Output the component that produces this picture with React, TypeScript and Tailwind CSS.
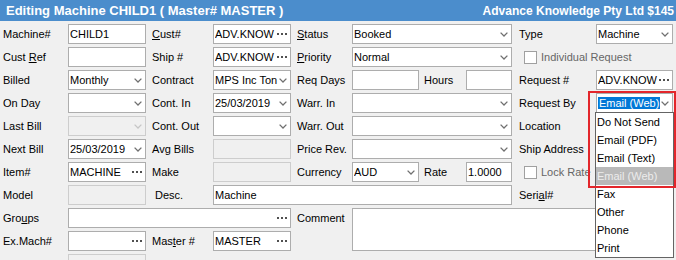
import type { ReactNode } from 'react';

const FONT = "font-['Liberation_Sans',Arial,sans-serif]";

function Chevron({ disabled }: { disabled?: boolean }) {
  return (
    <svg width="8" height="5" viewBox="0 0 8 5" className="shrink-0">
      <path d="M0.6 0.6 L4 4 L7.4 0.6" fill="none" stroke={disabled ? '#c6c6c6' : '#707070'} strokeWidth="1.3" />
    </svg>
  );
}

function Dots() {
  return (
    <svg width="10" height="2" viewBox="0 0 10 2" className="shrink-0">
      <rect x="0" y="0" width="2" height="2" fill="#505050" />
      <rect x="4" y="0" width="2" height="2" fill="#505050" />
      <rect x="8" y="0" width="2" height="2" fill="#505050" />
    </svg>
  );
}

type Kind = 'text' | 'select' | 'lookup';

function Field({
  value = '',
  kind = 'text',
  disabled,
  className = '',
  children,
}: {
  value?: string;
  kind?: Kind;
  disabled?: boolean;
  className?: string;
  children?: ReactNode;
}) {
  return (
    <div
      className={`flex h-[20px] items-center border px-[1px] ${
        disabled ? 'border-[#cdcdcd] bg-[#f0f0f0]' : 'border-[#adadad] bg-white'
      } ${className}`}
    >
      <span className="flex-1 truncate whitespace-nowrap">{children ?? value}</span>
      {kind === 'select' && (
        <span className="pr-[2px]">
          <Chevron disabled={disabled} />
        </span>
      )}
      {kind === 'lookup' && (
        <span className="pr-[2px]">
          <Dots />
        </span>
      )}
    </div>
  );
}

function Label({ children, className = '' }: { children?: ReactNode; className?: string }) {
  return <div className={`flex items-center whitespace-pre ${className}`}>{children}</div>;
}

function Check({ label, className = '' }: { label: string; className?: string }) {
  return (
    <div className={`flex items-center gap-[4px] whitespace-nowrap pl-[12px] text-[#666666] ${className}`}>
      <span className="h-[13px] w-[13px] shrink-0 border border-[#a0a0a0] bg-white" />
      <span>{label}</span>
    </div>
  );
}

const requestOptions = ['Do Not Send', 'Email (PDF)', 'Email (Text)', 'Email (Web)', 'Fax', 'Other', 'Phone', 'Print'];

export default function App() {
  return (
    <div className={`relative h-[260px] w-[676px] overflow-hidden bg-[#f0f0f0] text-[11px] text-black ${FONT}`}>
      {/* Title bar */}
      <div className="flex h-[21px] items-center justify-between overflow-hidden whitespace-nowrap bg-[#4b8dcc] pl-[6px] pr-[2px] pt-[1px] font-bold text-white">
        <span className="text-[13px]">Editing Machine CHILD1 ( Master# MASTER )</span>
        <span className="text-[12px]">Advance Knowledge Pty Ltd $145</span>
      </div>

      {/* Form */}
      <div className="grid auto-rows-[20px] grid-cols-[65px_78px_67px_78px_61px_160px_84px_77px] gap-y-[3px] pl-[3px] pt-[3px]">
        {/* row 1 */}
        <Label>Machine#</Label>
        <Field value="CHILD1" />
        <Label className="pl-[6px]">
          <u>C</u>ust#
        </Label>
        <Field value="ADV.KNOW" kind="lookup" />
        <Label className="pl-[6px]">
          <u>S</u>tatus
        </Label>
        <Field value="Booked" kind="select" />
        <Label className="pl-[7px]">Type</Label>
        <Field value="Machine" kind="select" />

        {/* row 2 */}
        <Label>
          {'Cust '}
          <u>R</u>ef
        </Label>
        <Field />
        <Label className="pl-[6px]">Ship #</Label>
        <Field value="ADV.KNOW" kind="lookup" />
        <Label className="pl-[6px]">
          <u>P</u>riority
        </Label>
        <Field value="Normal" kind="select" />
        <Check label="Individual Request" className="col-span-2" />

        {/* row 3 */}
        <Label>Billed</Label>
        <Field value="Monthly" kind="select" />
        <Label className="pl-[6px]">Contract</Label>
        <Field value="MPS Inc Ton" kind="select" />
        <Label className="pl-[6px]">Req Days</Label>
        <div className="flex">
          <Field className="w-[67px]" />
          <Label className="w-[47px] pl-[5px]">Hours</Label>
          <Field className="w-[46px]" />
        </div>
        <Label className="pl-[7px]">Request #</Label>
        <Field value="ADV.KNOW" kind="lookup" />

        {/* row 4 */}
        <Label>On Day</Label>
        <Field kind="select" />
        <Label className="pl-[6px]">Cont. In</Label>
        <Field value="25/03/2019" kind="select" />
        <Label className="pl-[6px]">Warr. In</Label>
        <Field kind="select" />
        <Label className="pl-[7px]">Request By</Label>
        <Field kind="select">
          <span className="bg-[#0078d7] px-[1px] text-white">Email (Web)</span>
        </Field>

        {/* row 5 */}
        <Label>Last Bill</Label>
        <Field kind="select" disabled />
        <Label className="pl-[6px]">Cont. Out</Label>
        <Field kind="select" />
        <Label className="pl-[6px]">Warr. Out</Label>
        <Field kind="select" />
        <Label className="pl-[7px]">Location</Label>
        <div />

        {/* row 6 */}
        <Label>Next Bill</Label>
        <Field value="25/03/2019" kind="select" />
        <Label className="pl-[6px]">Avg Bills</Label>
        <Field disabled />
        <Label className="pl-[6px]">Price Rev.</Label>
        <Field kind="select" />
        <Label className="pl-[7px]">Ship Address</Label>
        <div />

        {/* row 7 */}
        <Label>Item#</Label>
        <Field value="MACHINE" kind="lookup" />
        <Label className="pl-[6px]">Make</Label>
        <Field disabled />
        <Label className="pl-[6px]">Currency</Label>
        <div className="flex">
          <Field value="AUD" kind="select" className="w-[67px]" />
          <Label className="w-[47px] pl-[5px]">Rate</Label>
          <Field value="1.0000" className="w-[46px]" />
        </div>
        <Check label="Lock Rate" className="col-span-2" />

        {/* row 8 */}
        <Label>Model</Label>
        <Field disabled />
        <Label className="pl-[9px]">Desc.</Label>
        <Field value="Machine" className="col-span-3" />
        <Label className="pl-[7px]">
          Seri<u>a</u>l#
        </Label>
        <div />

        {/* row 9 */}
        <Label>
          Gro<u>u</u>ps
        </Label>
        <Field kind="lookup" className="col-span-3" />
        <Label className="pl-[6px]">Comment</Label>
        <div className="col-span-3 row-span-2 border border-[#adadad] bg-white" />

        {/* row 10 */}
        <Label>Ex.Mach#</Label>
        <Field kind="lookup" />
        <Label className="pl-[6px]">
          Mas<u>t</u>er #
        </Label>
        <Field value="MASTER" kind="lookup" />
        <div />

        {/* row 11 */}
        <Label>Ch.Fault</Label>
        <Field disabled />
      </div>

      {/* Open dropdown list */}
      <div className="absolute left-[595px] top-[112px] h-[146px] w-[79px] border border-[#646464] bg-white">
        {requestOptions.map((opt) => (
          <div
            key={opt}
            className={`flex h-[18px] items-center whitespace-nowrap pl-[1px] ${
              opt === 'Email (Web)' ? 'bg-[#b9b9b9] text-[#ececec]' : ''
            }`}
          >
            {opt}
          </div>
        ))}
      </div>

      {/* Red highlight annotation */}
      <div className="pointer-events-none absolute left-[588px] top-[91px] h-[97px] w-[88px] border-2 border-[#e3262b]" />
    </div>
  );
}
